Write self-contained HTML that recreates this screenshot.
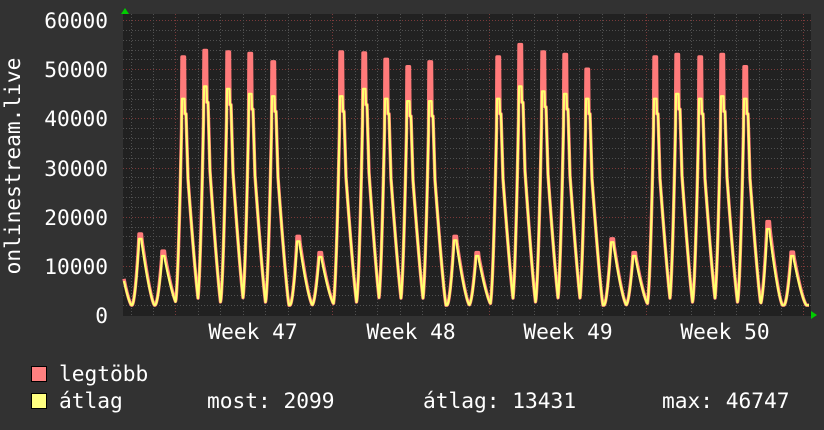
<!DOCTYPE html>
<html><head><meta charset="utf-8"><style>
html,body{margin:0;padding:0;background:#323232;}
svg{display:block}
text{font-family:"DejaVu Sans Mono","Liberation Mono",monospace;font-size:21.2px;fill:#fff}
</style></head><body>
<svg id="s" width="824" height="430" xmlns="http://www.w3.org/2000/svg">
<rect width="824" height="430" fill="#323232"/>
<rect x="123" y="14" width="688" height="302" fill="#212121"/>
<g id="grid"></g>
<path id="mx" fill="none" stroke="#ff7a7a" stroke-width="3.4" stroke-linejoin="round"/>
<path id="av" fill="none" stroke="#ffff70" stroke-width="2.2" stroke-linejoin="round"/>
<polygon points="121,14 125,8 129,14" fill="#00cc00"/>
<polygon points="811,311 817,315 811,319" fill="#00cc00"/>
<g text-anchor="end">
<text x="108" y="28">60000</text>
<text x="108" y="77">50000</text>
<text x="108" y="126">40000</text>
<text x="108" y="176">30000</text>
<text x="108" y="225">20000</text>
<text x="108" y="274">10000</text>
<text x="108" y="323">0</text>
</g>
<g text-anchor="middle">
<text x="253" y="339">Week 47</text>
<text x="411" y="339">Week 48</text>
<text x="568" y="339">Week 49</text>
<text x="725" y="339">Week 50</text>
</g>
<text transform="translate(20,166) rotate(-90)" text-anchor="middle">onlinestream.live</text>
<rect x="31.5" y="366.5" width="15" height="15" fill="#ff8080" stroke="#000"/>
<rect x="31.5" y="393.5" width="15" height="15" fill="#ffff80" stroke="#000"/>
<text x="59" y="381">legtöbb</text>
<text x="59" y="408">átlag</text>
<text x="207" y="408">most: 2099</text>
<text x="423" y="408">átlag: 13431</text>
<text x="662" y="408">max: 46747</text>
</svg>
<script>
var NS="http://www.w3.org/2000/svg";
var g=document.getElementById("grid");
function ln(x1,y1,x2,y2,c){var l=document.createElementNS(NS,"line");l.setAttribute("x1",x1);l.setAttribute("y1",y1);l.setAttribute("x2",x2);l.setAttribute("y2",y2);l.setAttribute("stroke",c);l.setAttribute("stroke-dasharray","1,2");l.setAttribute("stroke-width","1");g.appendChild(l);}
function Y(v){return 315-v*295/60000;}
for(var v=2000;v<=60000;v+=2000){var y=Math.round(Y(v))+0.5;ln(123,y,811,y,v%10000==0?"#7a3a3a":"#505050");}
for(var x=130.5;x<811;x+=22.43){var wk=Math.abs(((x-175.5)/157)-Math.round((x-175.5)/157))<0.02;ln(Math.round(x)+0.5,14,Math.round(x)+0.5,316,wk?"#7a3a3a":"#505050");}
var peaks=[[140,16500,15500],[163,13000,12000],[183,52500,44000],[205,53800,46500],[228,53500,46000],[250,53200,45000],[273,51500,44500],[298,16000,15000],[320,12700,11800],[341,53500,44500],[364,53300,46000],[386,52000,44000],[408,50500,43500],[430,51500,43500],[455,16000,15200],[477,12700,12000],[498,52500,44000],[520,55000,46500],[543,53500,45500],[565,53000,45000],[587,50000,44000],[612,15500,14800],[634,12700,12000],[655,52500,44000],[677,53000,45000],[700,52500,44000],[722,53000,44500],[745,50500,44000],[768,19000,17500],[792,12800,12000],[117,14000,13000]];
var B=2000;
function one(t,P,A,big){
 if(t<-8||t>16) return 0;
 if(t<-1){return B+(A*0.97-B)*Math.pow((t+8)/7,1.8);}
 if(t<=1.5) return P;
 if(!big){return B+(A*0.97-B)*Math.pow(Math.max(0,1-(t-1.5)/13),1.4);}
 if(t<=3) return A*0.93;
 if(t<=5) return A*(0.93-(t-3)/2*0.3);
 return B+(A*0.63-B)*Math.pow(Math.max(0,1-(t-5)/11),1.2);
}
function val(x,mi){var s=B;for(var i=0;i<peaks.length;i++){var p=peaks[i];var big=p[1]>30000;var P=p[mi],A=p[2];if(!big){A=P;}s=Math.max(s,one(x-p[0],P,A,big));}return s;}
function path(mi){var d="";for(var x=124;x<=809;x+=0.5){d+=(x==124?"M":"L")+x+","+Y(val(x,mi)).toFixed(1);}return d;}
document.getElementById("mx").setAttribute("d",path(1));
document.getElementById("av").setAttribute("d",path(2));
</script>
</body></html>
